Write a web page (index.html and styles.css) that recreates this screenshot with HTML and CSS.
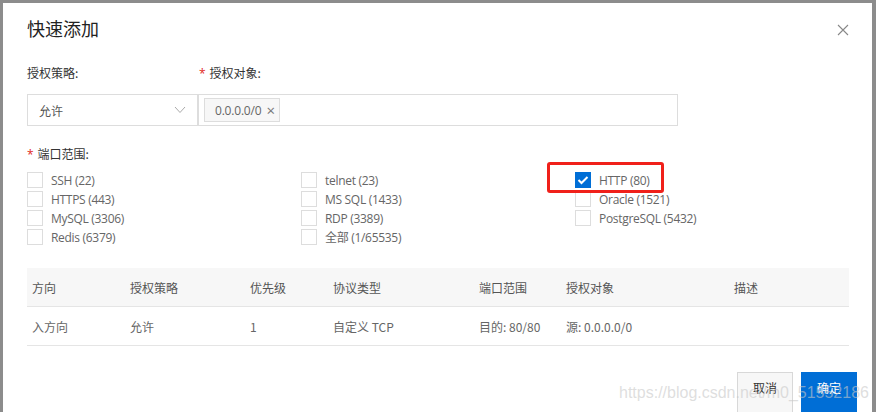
FILE: index.html
```html
<!DOCTYPE html>
<html lang="zh">
<head>
<meta charset="utf-8">
<title>快速添加</title>
<link rel="stylesheet" href="styles.css">
</head>
<body>
<div class="dialog">
  <div class="header">
    <h1 class="title">快速添加</h1>
    <svg class="close" width="12" height="12" viewBox="0 0 12 12"><path d="M1 1L11 11M11 1L1 11" stroke="#888" stroke-width="1.1" fill="none"/></svg>
  </div>

  <div class="form-grid">
    <div class="label">授权策略:</div>
    <div class="label"><span class="star">*</span>授权对象:</div>
    <div class="select">
      <span>允许</span>
      <svg class="chev" width="12" height="8" viewBox="0 0 12 8"><path d="M1 1L6 6.5L11 1" stroke="#aaa" stroke-width="1" fill="none"/></svg>
    </div>
    <div class="tag-input">
      <span class="tag">0.0.0.0/0 <span class="tag-x">×</span></span>
    </div>
  </div>

  <div class="label port-label"><span class="star">*</span>端口范围:</div>
  <div class="checks">
    <div class="col">
      <label class="check"><span class="box"></span>SSH (22)</label>
      <label class="check"><span class="box"></span>HTTPS (443)</label>
      <label class="check"><span class="box"></span>MySQL (3306)</label>
      <label class="check"><span class="box"></span>Redis (6379)</label>
    </div>
    <div class="col">
      <label class="check"><span class="box"></span>telnet (23)</label>
      <label class="check"><span class="box"></span>MS SQL (1433)</label>
      <label class="check"><span class="box"></span>RDP (3389)</label>
      <label class="check"><span class="box"></span>全部 (1/65535)</label>
    </div>
    <div class="col col3">
      <label class="check"><span class="box checked"><svg width="12" height="10" viewBox="0 0 12 10"><path d="M1.5 5L4.5 8L10.5 2" stroke="#fff" stroke-width="2" fill="none"/></svg></span>HTTP (80)</label>
      <label class="check"><span class="box"></span>Oracle (1521)</label>
      <label class="check"><span class="box"></span>PostgreSQL (5432)</label>
      <span class="highlight"></span>
    </div>
  </div>

  <table class="rules">
    <thead>
      <tr><th class="c1">方向</th><th class="c2">授权策略</th><th class="c3">优先级</th><th class="c4">协议类型</th><th class="c5">端口范围</th><th class="c6">授权对象</th><th>描述</th></tr>
    </thead>
    <tbody>
      <tr><td>入方向</td><td>允许</td><td>1</td><td>自定义 TCP</td><td>目的: 80/80</td><td>源: 0.0.0.0/0</td><td></td></tr>
    </tbody>
  </table>

  <div class="footer">
    <button class="btn cancel">取消</button>
    <button class="btn ok">确定</button>
    <span class="watermark">https://blog.csdn.net/m0_51552186</span>
  </div>
</div>
</body>
</html>
```

FILE: styles.css
```css
html, body {
  margin: 0;
  padding: 0;
}
body {
  background: #8c8c8c;
  width: 876px;
  height: 412px;
  overflow: hidden;
  font-family: "Open Sans", "Noto Sans CJK SC", sans-serif;
  font-size: 12px;
  color: #333;
}
.dialog {
  margin: 3px 4px 0 3px;
  height: 409px;
  background: #fff;
  padding: 0 0 0 24px;
  box-sizing: border-box;
  position: relative;
}
.header {
  display: flex;
  align-items: center;
  justify-content: space-between;
  padding: 12px 23px 0 0;
  height: 26px;
}
.title {
  margin: 0;
  font-size: 18px;
  font-weight: normal;
  color: #222;
  line-height: 26px;
  font-family: "Noto Sans CJK SC", sans-serif;
}
.close {
  display: block;
  margin-top: 3px;
}
.form-grid {
  display: grid;
  grid-template-columns: 171px 480px;
  grid-template-rows: 20px 32px;
  row-gap: 11px;
  margin-top: 22px;
}
.label {
  line-height: 20px;
  color: #333;
  font-family: "Noto Sans CJK SC", sans-serif;
}
.star {
  color: #e1251b;
  margin-right: 4px;
  font-family: "Open Sans", sans-serif;
}
.form-grid .label:nth-child(2) {
  padding-left: 1px;
}
.select {
  border: 1px solid #ddd;
  display: flex;
  align-items: center;
  justify-content: space-between;
  padding: 0 11px 0 11px;
  color: #555;
  font-family: "Noto Sans CJK SC", sans-serif;
}
.chev {
  display: block;
}
.tag-input {
  border: 1px solid #ddd;
  display: flex;
  align-items: center;
  padding-left: 5px;
}
.tag {
  display: inline-flex;
  align-items: center;
  height: 22px;
  padding: 0 4px 0 10px;
  border: 1px solid #ddd;
  background: #f7f7f7;
  color: #666;
  letter-spacing: -0.2px;
}
.tag-x {
  font-size: 15px;
  margin-left: 5px;
  color: #777;
  line-height: 1;
}
.port-label {
  margin-top: 18px;
}
.checks {
  display: grid;
  grid-template-columns: 274px 274px 274px;
  margin-top: 7px;
}
.col {
  display: flex;
  flex-direction: column;
  gap: 3px;
  position: relative;
}
.check {
  display: flex;
  align-items: center;
  height: 16px;
  color: #666;
  letter-spacing: -0.3px;
}
.box {
  width: 14px;
  height: 14px;
  border: 1px solid #ddd;
  margin-right: 8px;
  display: flex;
  align-items: center;
  justify-content: center;
  box-sizing: content-box;
}
.box.checked {
  background: #006ed6;
  border-color: #006ed6;
}
.box svg {
  display: block;
}
.highlight {
  position: absolute;
  left: -28px;
  top: -10px;
  width: 111px;
  height: 25px;
  border: 3px solid #f0201a;
  border-radius: 3px;
}
.rules {
  margin-top: 23px;
  width: 822px;
  border-collapse: collapse;
  color: #666;
  font-family: "Noto Sans CJK SC", "Open Sans", sans-serif;
}
.rules th {
  background: #f7f7f7;
  font-weight: normal;
  text-align: left;
  color: #555;
  height: 38px;
  padding: 0 0 0 5px;
  border-bottom: 1px solid #e5e5e5;
}
.rules td {
  height: 38px;
  padding: 0 0 0 5px;
  border-bottom: 1px solid #e5e5e5;
}
.c1 { width: 93px; }
.c2 { width: 115px; }
.c3 { width: 78px; }
.c4 { width: 141px; }
.c5 { width: 82px; }
.c6 { width: 163px; }
.footer {
  display: flex;
  justify-content: flex-end;
  gap: 8px;
  padding-right: 15px;
  margin-top: 26px;
  position: relative;
}
.btn {
  height: 41px;
  font-size: 12px;
  font-family: "Noto Sans CJK SC", sans-serif;
  padding: 0 0 10px 0;
  line-height: 20px;
  cursor: pointer;
}
.cancel {
  width: 56px;
  background: #f7f7f7;
  border: 1px solid #d8d8d8;
  color: #333;
}
.ok {
  width: 56px;
  background: #006ed6;
  border: 1px solid #006ed6;
  color: #fff;
}
.watermark {
  position: absolute;
  left: 592px;
  top: 12px;
  font-family: "Liberation Sans", sans-serif;
  font-size: 16px;
  color: rgba(200, 200, 200, 0.6);
  white-space: nowrap;
  pointer-events: none;
}
```
